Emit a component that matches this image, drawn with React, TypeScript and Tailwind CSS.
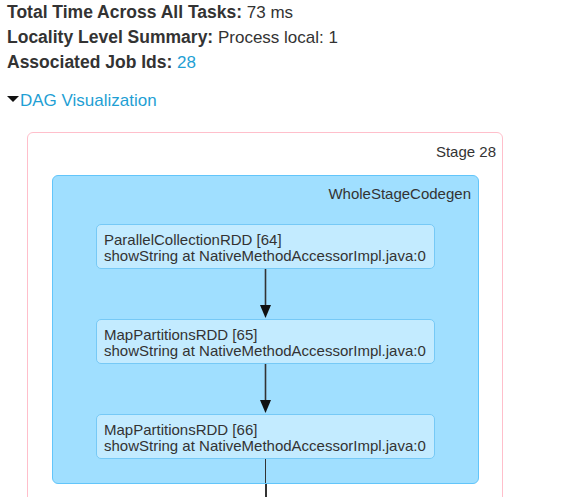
import { FC } from "react";

const font = { fontFamily: '"Liberation Sans", Arial, Helvetica, sans-serif' };

type Rdd = { name: string; site: string };

const rdds: Rdd[] = [
  { name: "ParallelCollectionRDD [64]", site: "showString at NativeMethodAccessorImpl.java:0" },
  { name: "MapPartitionsRDD [65]", site: "showString at NativeMethodAccessorImpl.java:0" },
  { name: "MapPartitionsRDD [66]", site: "showString at NativeMethodAccessorImpl.java:0" },
];

/** Edge between two RDD nodes: a stem with a filled arrow head at the bottom. */
const Arrow: FC = () => (
  <svg width="339" height="50" className="block">
    <line x1="169.5" y1="0" x2="169.5" y2="38" stroke="#333" strokeWidth="1.6" />
    <polygon points="164,36 175,36 169.5,49" fill="#111" />
  </svg>
);

const Node: FC<{ rdd: Rdd }> = ({ rdd }) => (
  <div className="w-[339px] h-[45px] rounded-[5px] border border-[#76c9f6] bg-[#c3ebff] pl-[7px] pt-[7px] text-[15px] leading-[16px] text-[#333] whitespace-nowrap">
    <div>{rdd.name}</div>
    <div>{rdd.site}</div>
  </div>
);

export default function App() {
  return (
    <div className="w-[566px] h-[497px] overflow-hidden bg-white text-[#333]" style={font}>
      <div className="pl-[7px] text-[17px] leading-[25px]">
        <div><b className="text-[17.5px]">Total Time Across All Tasks:</b> 73 ms</div>
        <div><b className="text-[17.5px]">Locality Level Summary:</b> Process local: 1</div>
        <div><b className="text-[17.5px]">Associated Job Ids:</b> <a className="text-[#1f9fd4]">28</a></div>
        <div className="mt-[13px] flex items-center text-[#1f9fd4]">
          <svg width="13" height="6" className="-mt-[4px]">
            <polygon points="0,0 12,0 6,6" fill="#111" />
          </svg>
          <span>DAG Visualization</span>
        </div>
      </div>

      <div className="ml-[27px] mt-[19px] w-[476px] h-[420px] rounded-[6px] border border-[#ffbfcb]">
        <div className="pt-[11px] pr-[6px] text-right text-[15px] leading-[16px]">Stage 28</div>
        <div className="ml-[24px] mt-[15px] w-[427px] rounded-[6px] border border-[#62c5fa] bg-[#a0dfff]">
          <div className="pt-[10px] pr-[7px] text-right text-[15px] leading-[16px]">WholeStageCodegen</div>
          <div className="ml-[43px] mt-[22px]">
            {rdds.map((r, i) => (
              <div key={i}>
                {i > 0 && <Arrow />}
                <Node rdd={r} />
              </div>
            ))}
            <div className="h-[24px] w-[339px] flex justify-center">
              <div className="w-[1.6px] h-full bg-[#333]" />
            </div>
          </div>
        </div>
        <div className="ml-[237px] w-[1.6px] h-[40px] bg-[#333]" />
      </div>
    </div>
  );
}
